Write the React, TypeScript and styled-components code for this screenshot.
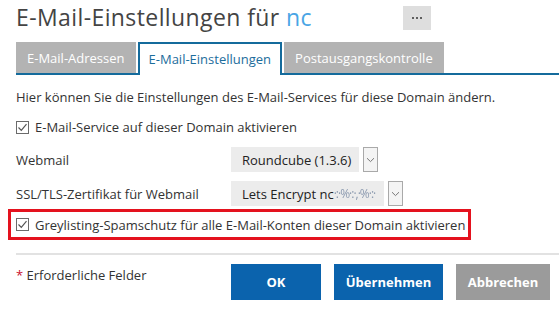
import React from "react";
import styled, { createGlobalStyle } from "styled-components";

const GlobalStyle = createGlobalStyle`
  html, body {
    margin: 0;
    padding: 0;
    background: #ffffff;
  }
  body {
    font-family: "Open Sans", "DejaVu Sans", sans-serif;
    color: #333333;
  }
`;

const Page = styled.div`
  width: 559px;
  height: 313px;
  padding-left: 16px;
  box-sizing: border-box;
  overflow: hidden;
`;

const Header = styled.div`
  display: flex;
  align-items: flex-start;
  height: 42px;
`;

const Title = styled.h1`
  margin: 2px 0 0;
  font-size: 23px;
  letter-spacing: 0.4px;
  line-height: 30px;
  font-weight: 400;
  color: #444444;
  width: 387px;
  white-space: nowrap;
`;

const Domain = styled.span`
  color: #4aa5e5;
`;

const MoreButton = styled.button`
  margin-top: 6px;
  width: 28px;
  height: 24px;
  border: none;
  background: #dedede;
  padding: 0;
  display: flex;
  align-items: center;
  justify-content: center;
  gap: 2px;
`;

const Dot = styled.span`
  width: 2px;
  height: 2px;
  background: #333;
  border-radius: 1px;
`;

const TabBar = styled.div`
  display: flex;
  align-items: flex-end;
  gap: 2px;
  height: 31px;
  border-bottom: 2px solid #146b9c;
`;

const Tab = styled.div<{ $active?: boolean }>`
  box-sizing: border-box;
  height: ${(p) => (p.$active ? "33px" : "31px")};
  margin-bottom: ${(p) => (p.$active ? "-2px" : "0")};
  padding: 0 ${(p) => (p.$active ? "9px" : "11px")};
  display: flex;
  align-items: center;
  font-size: 13px;
  background: ${(p) => (p.$active ? "#ffffff" : "#b3b3b3")};
  color: ${(p) => (p.$active ? "#1c6d9c" : "#ffffff")};
  border: ${(p) => (p.$active ? "2px solid #146b9c" : "none")};
  border-bottom: none;
  padding-bottom: ${(p) => (p.$active ? "2px" : "0")};
`;

const Intro = styled.p`
  margin: 12px 0 0;
  font-size: 13px;
  line-height: 20px;
`;

const CheckRow = styled.label`
  display: flex;
  align-items: center;
  gap: 6px;
  font-size: 13px;
  line-height: 20px;
  margin-top: 10px;
`;

const Box = styled.span`
  box-sizing: border-box;
  width: 13px;
  height: 13px;
  border: 1px solid #6b6b6b;
  background: #fff;
  display: flex;
  align-items: center;
  justify-content: center;
`;

const FormGrid = styled.div`
  display: grid;
  grid-template-columns: 215px auto;
  row-gap: 9px;
  align-items: center;
  margin-top: 10px;
  font-size: 13px;
`;

const Label = styled.div`
  line-height: 20px;
`;

const Select = styled.div`
  display: flex;
  align-items: stretch;
  gap: 4px;
  height: 25px;
`;

const SelectValue = styled.div<{ $w: number }>`
  width: ${(p) => p.$w}px;
  box-sizing: border-box;
  background: #ececec;
  padding-left: 11px;
  display: flex;
  align-items: center;
  white-space: nowrap;
  color: #222;
`;

const SelectArrow = styled.div`
  width: 15px;
  box-sizing: border-box;
  border: 1px solid #a9a9a9;
  background: #f4f4f4;
  display: flex;
  align-items: center;
  justify-content: center;
`;

const Noise = styled.span`
  letter-spacing: -1px;
  color: #8d9bb0;
  font-size: 12px;
  filter: blur(0.3px);
`;

const Highlight = styled.div`
  margin: 3px 0 0 -8px;
  width: 463px;
  height: 31px;
  box-sizing: border-box;
  border: 3px solid #e4121e;
  padding-left: 5px;
  display: flex;
  align-items: center;
  gap: 6px;
  font-size: 13px;
`;

const Divider = styled.hr`
  margin: 13px 0 0;
  border: none;
  border-top: 2px solid #e2e2e2;
`;

const Footer = styled.div`
  display: grid;
  grid-template-columns: 215px auto;
  margin-top: 9px;
`;

const Required = styled.div`
  font-size: 13px;
  line-height: 20px;
  padding-top: 1px;
`;

const Star = styled.span`
  color: #c8102e;
`;

const Buttons = styled.div`
  display: flex;
  gap: 13px;
`;

const Button = styled.button<{ $w: number; $grey?: boolean }>`
  width: ${(p) => p.$w}px;
  height: 36px;
  border: none;
  background: ${(p) => (p.$grey ? "#9b9b9b" : "#0b63ad")};
  color: #fff;
  font-family: "Open Sans", sans-serif;
  font-weight: 700;
  font-size: 13px;
  padding: 0;
`;

const Check = () => (
  <Box>
    <svg width="11" height="11" viewBox="0 0 11 11">
      <path d="M1.5 5.5 L4.3 8.3 L9.5 2.2" fill="none" stroke="#555" strokeWidth="1.2" />
    </svg>
  </Box>
);

const Chevron = () => (
  <svg width="9" height="6" viewBox="0 0 9 6">
    <path d="M1 1.2 L4.5 4.6 L8 1.2" fill="none" stroke="#777" strokeWidth="1" />
  </svg>
);

export default function App() {
  return (
    <>
      <GlobalStyle />
      <Page>
        <Header>
          <Title>
            E-Mail-Einstellungen für <Domain>nc</Domain>
          </Title>
          <MoreButton>
            <Dot />
            <Dot />
            <Dot />
          </MoreButton>
        </Header>
        <TabBar>
          <Tab>E-Mail-Adressen</Tab>
          <Tab $active>E-Mail-Einstellungen</Tab>
          <Tab>Postausgangskontrolle</Tab>
        </TabBar>
        <Intro>Hier können Sie die Einstellungen des E-Mail-Services für diese Domain ändern.</Intro>
        <CheckRow>
          <Check />
          E-Mail-Service auf dieser Domain aktivieren
        </CheckRow>
        <FormGrid>
          <Label>Webmail</Label>
          <Select>
            <SelectValue $w={128}>Roundcube (1.3.6)</SelectValue>
            <SelectArrow>
              <Chevron />
            </SelectArrow>
          </Select>
          <Label>SSL/TLS-Zertifikat für Webmail</Label>
          <Select>
            <SelectValue $w={153}>
              Lets Encrypt nc<Noise>·:·%·:·,·%·:·</Noise>
            </SelectValue>
            <SelectArrow>
              <Chevron />
            </SelectArrow>
          </Select>
        </FormGrid>
        <Highlight>
          <Check />
          Greylisting-Spamschutz für alle E-Mail-Konten dieser Domain aktivieren
        </Highlight>
        <Divider />
        <Footer>
          <Required>
            <Star>*</Star> Erforderliche Felder
          </Required>
          <Buttons>
            <Button $w={90}>OK</Button>
            <Button $w={109}>Übernehmen</Button>
            <Button $w={94} $grey>
              Abbrechen
            </Button>
          </Buttons>
        </Footer>
      </Page>
    </>
  );
}
